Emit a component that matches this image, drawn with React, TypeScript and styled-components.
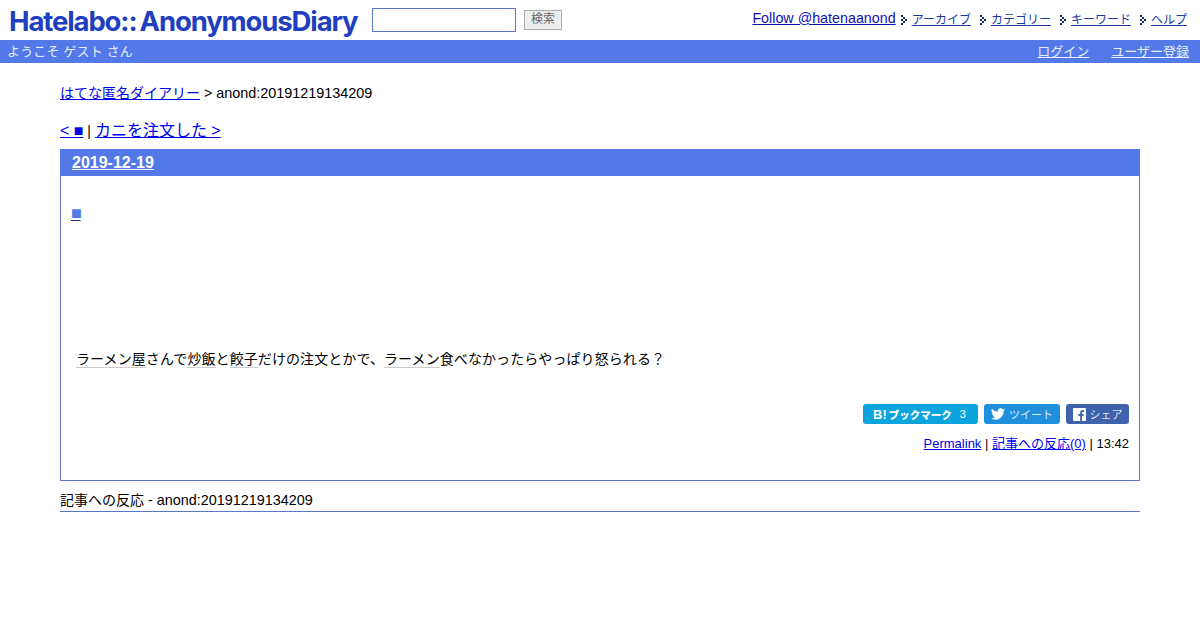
import React from 'react';
import styled, { createGlobalStyle } from 'styled-components';

const GlobalStyle = createGlobalStyle`
  html, body {
    margin: 0;
    padding: 0;
    background: #fff;
    color: #000;
    font-family: "Liberation Sans", "Noto Sans CJK JP", sans-serif;
    font-size: 14px;
  }
  a { color: #0000ee; }
`;

// latin runs sit slightly larger than the japanese ones in the reference
const Latin = styled.span`
  font-size: 14.4px;
`;

// HEADER
const Header = styled.header`
  display: flex;
  align-items: flex-start;
  justify-content: space-between;
  height: 40px;
`;

const HeaderLeft = styled.div`
  display: flex;
  align-items: flex-start;
`;

const Logo = styled.h1`
  margin: 4px 0 0 9px;
  width: 350px;
  height: 34px;
  font-family: Inter, sans-serif;
  font-size: 27.5px;
  line-height: 34px;
  font-weight: 700;
  letter-spacing: -1.12px;
  color: #1f3fbe;
  white-space: nowrap;
`;

const LogoBreak = styled.span`
  margin-left: 3px;
`;

const SearchForm = styled.form`
  display: flex;
  margin: 8px 0 0 13px;
  gap: 8px;
`;

const SearchInput = styled.input`
  box-sizing: border-box;
  width: 144px;
  height: 24px;
  border: 1px solid #5a76c8;
  padding: 0 4px;
  background: #fff;
`;

const SearchButton = styled.button`
  box-sizing: border-box;
  width: 38px;
  height: 20px;
  margin-top: 2px;
  padding: 0 0 2px;
  border: 1px solid #aaa;
  background: #eee;
  color: #666;
  font-family: inherit;
  font-size: 12px;
  line-height: 16px;
`;

const HeaderNav = styled.nav`
  display: flex;
  align-items: baseline;
  padding: 10px 13px 0 0;
`;

const FollowLink = styled.a`
  position: relative;
  top: -1px;
  font-size: 14.3px;
  color: #1010b4;
  margin-right: 5px;
`;

const NavItem = styled.span`
  display: inline-flex;
  align-items: baseline;
  margin-left: 9px;
  &:first-of-type { margin-left: 0; }
  a {
    font-size: 12px;
    color: #1a3a9c;
  }
  svg {
    margin-right: 4px;
    align-self: center;
    margin-top: 2px;
  }
`;

const UserBar = styled.div`
  display: flex;
  align-items: center;
  justify-content: space-between;
  box-sizing: border-box;
  height: 23px;
  padding: 0 11px 2px 7px;
  background: #5279e7;
  color: #e8edfb;
  font-size: 13px;
`;

const Welcome = styled.span`
  letter-spacing: 0.15px;
`;

const UserLinks = styled.div`
  display: flex;
  gap: 22px;
  a { color: #e8edfb; }
`;

// MAIN
const Main = styled.main`
  margin: 0 60px;
  padding-top: 21px;
`;

const Breadcrumb = styled.div`
  line-height: 18px;
  height: 18px;
`;

const Pager = styled.div`
  margin-top: 19px;
  font-size: 14px;
  line-height: 20px;
  height: 20px;
  a { font-size: 16px; }
`;

const Section = styled.section`
  box-sizing: border-box;
  margin-top: 8px;
  height: 332px;
  border: 1px solid #5a76c8;
`;

const DayTitle = styled.h2`
  margin: -1px -1px 0;
  height: 27px;
  padding: 0 12px;
  background: #5279e7;
  font-size: 16px;
  line-height: 27px;
  a { color: #fff; }
`;

const EntryBody = styled.div`
  padding: 0 10px;
`;

const EntryTitle = styled.h3`
  margin: 27px 0 0;
  height: 20px;
  font-size: 18px;
  line-height: 20px;
  font-weight: 700;
  a {
    color: #5279e7;
    letter-spacing: -1.3px;
    text-decoration: underline;
    text-decoration-color: #1a2a8c;
    text-decoration-thickness: 1px;
  }
`;

const EntryText = styled.p`
  margin: 126px 0 0 5px;
  line-height: 20px;
  letter-spacing: 0.08px;
`;

const Keyword = styled.span`
  border-bottom: 1px solid #ccc;
`;

const ShareRow = styled.div`
  display: flex;
  justify-content: flex-end;
  gap: 6px;
  margin-top: 35px;
`;

const ShareButton = styled.span<{ $color: string; $width: number }>`
  display: inline-flex;
  align-items: center;
  justify-content: center;
  gap: 4px;
  box-sizing: border-box;
  width: ${({ $width }) => $width}px;
  height: 20px;
  border-radius: 3px;
  background: ${({ $color }) => $color};
  color: rgba(255, 255, 255, 0.85);
  font-size: 11px;
  svg { flex: none; }
`;

const HatenaMark = styled.b`
  margin-right: -2px;
  color: #fff;
  font-size: 13px;
  font-weight: 700;
`;

const HatenaLabel = styled.b`
  color: #fff;
  font-size: 10.5px;
  font-weight: 900;
`;

const HatenaCount = styled.span`
  margin: 0 2px 0 4px;
  color: #fff;
`;

const Meta = styled.div`
  margin-top: 11px;
  text-align: right;
  font-size: 13px;
  line-height: 18px;
`;

const Backlinks = styled.h3`
  margin: 10px 0 0;
  height: 20px;
  font-size: 14px;
  font-weight: 400;
  line-height: 19px;
  border-bottom: 1px solid #5a76c8;
`;

const Arrow = () => (
  <svg width="7" height="10" viewBox="0 0 7 10" aria-hidden="true">
    <path
      d="M0 0h2v2H0zM2 2h2v2H2zM0 4h2v2H0zM4 4h2v2H4zM2 6h2v2H2zM0 8h2v2H0z"
      fill="#14265e"
    />
  </svg>
);

const TwitterIcon = () => (
  <svg width="14" height="12" viewBox="0 0 24 20" aria-hidden="true">
    <path
      fill="#fff"
      d="M24 2.400a9.800 9.800 0 0 1-2.800.8A4.900 4.900 0 0 0 23.300.5a9.800 9.800 0 0 1-3.100 1.200 4.900 4.900 0 0 0-8.400 4.500A14 14 0 0 1 1.700.9a4.900 4.900 0 0 0 1.500 6.600 4.900 4.900 0 0 1-2.200-.6c0 2.400 1.700 4.400 3.900 4.900a4.900 4.900 0 0 1-2.200.1 4.900 4.900 0 0 0 4.600 3.400A9.900 9.900 0 0 1 0 17.300 14 14 0 0 0 21.500 4.900c1-.7 1.800-1.500 2.500-2.500z"
    />
  </svg>
);

const FacebookIcon = () => (
  <svg width="13" height="13" viewBox="0 0 12 12" aria-hidden="true">
    <path
      fill="#fff"
      d="M1 0h10a1 1 0 0 1 1 1v10a1 1 0 0 1-1 1H8.300V7.400h1.500l.2-1.800H8.300V4.500c0-.5.200-.9.900-.9h1V2c-.3 0-.8-.1-1.300-.1-1.400 0-2.300.8-2.300 2.400v1.300H5v1.800h1.600V12H1a1 1 0 0 1-1-1V1a1 1 0 0 1 1-1z"
    />
  </svg>
);

const App = () => (
  <>
    <GlobalStyle />
    <Header>
      <HeaderLeft>
        <Logo>
          Hatelabo::<LogoBreak>AnonymousDiary</LogoBreak>
        </Logo>
        <SearchForm>
          <SearchInput type="text" />
          <SearchButton type="button">検索</SearchButton>
        </SearchForm>
      </HeaderLeft>
      <HeaderNav>
        <FollowLink href="#">Follow @hatenaanond</FollowLink>
        {['アーカイブ', 'カテゴリー', 'キーワード', 'ヘルプ'].map((label) => (
          <NavItem key={label}>
            <Arrow />
            <a href="#">{label}</a>
          </NavItem>
        ))}
      </HeaderNav>
    </Header>
    <UserBar>
      <Welcome>ようこそ ゲスト さん</Welcome>
      <UserLinks>
        <a href="#">ログイン</a>
        <a href="#">ユーザー登録</a>
      </UserLinks>
    </UserBar>
    <Main>
      <Breadcrumb>
        <a href="#">はてな匿名ダイアリー</a> <Latin>&gt; anond:20191219134209</Latin>
      </Breadcrumb>
      <Pager>
        <a href="#">&lt; ■</a> | <a href="#">カニを注文した &gt;</a>
      </Pager>
      <Section>
        <DayTitle>
          <a href="#">2019-12-19</a>
        </DayTitle>
        <EntryBody>
          <EntryTitle>
            <a href="#">■</a>
          </EntryTitle>
          <EntryText>
            <Keyword>ラーメン屋</Keyword>さんで<Keyword>炒飯</Keyword>と<Keyword>餃子</Keyword>
            だけの注文とかで、<Keyword>ラーメン</Keyword>食べなかったらやっぱり怒られる？
          </EntryText>
          <ShareRow>
            <ShareButton $color="#0ba4dc" $width={115}>
              <HatenaMark>B!</HatenaMark>
              <HatenaLabel>ブックマーク</HatenaLabel>
              <HatenaCount>3</HatenaCount>
            </ShareButton>
            <ShareButton $color="#2090dc" $width={76}>
              <TwitterIcon />
              ツイート
            </ShareButton>
            <ShareButton $color="#3f62ad" $width={63}>
              <FacebookIcon />
              シェア
            </ShareButton>
          </ShareRow>
          <Meta>
            <a href="#">Permalink</a> | <a href="#">記事への反応(0)</a> | 13:42
          </Meta>
        </EntryBody>
      </Section>
      <Backlinks>
        記事への反応 <Latin>- anond:20191219134209</Latin>
      </Backlinks>
    </Main>
  </>
);

export default App;
